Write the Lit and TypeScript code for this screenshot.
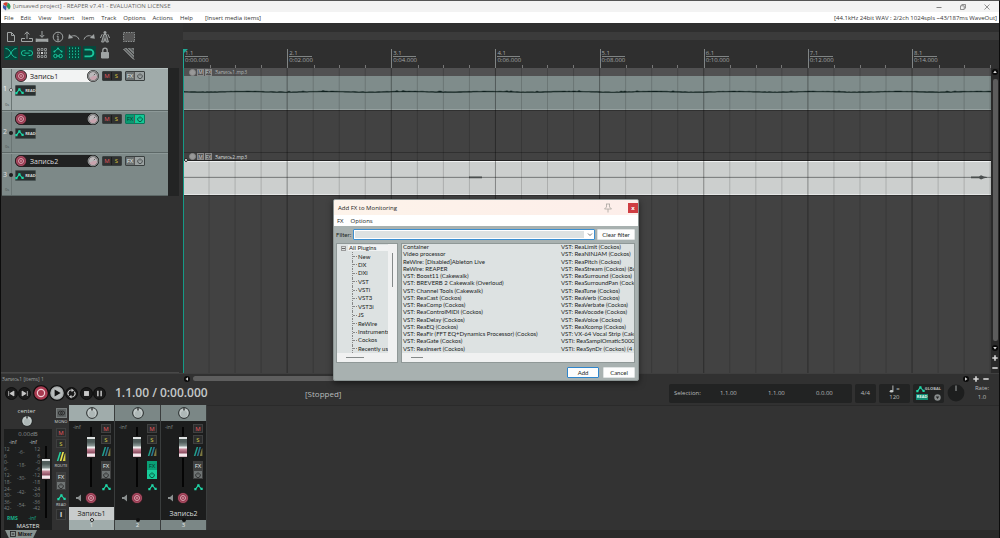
import { LitElement, html, svg, css, nothing } from "lit";
import { customElement } from "lit/decorators.js";
import { classMap } from "lit/directives/class-map.js";

/* ---------- data ---------- */
const MENUS = ["File", "Edit", "View", "Insert", "Item", "Track", "Options", "Actions", "Help"];
const TRACKS = [
  { n: 1, name: "Запись1", selected: true, fxOn: false },
  { n: 2, name: "", selected: false, fxOn: true },
  { n: 3, name: "Запись2", selected: false, fxOn: false },
];
const MARKS = [
  ["1.1", "0:00.000"], ["2.1", "0:02.000"], ["3.1", "0:04.000"], ["4.1", "0:06.000"],
  ["5.1", "0:08.000"], ["6.1", "0:10.000"], ["7.1", "0:12.000"], ["8.1", "0:14.000"],
];
const TREE = ["New", "DX", "DXi", "VST", "VSTi", "VST3", "VST3i", "JS", "ReWire", "Instruments", "Cockos", "Recently us"];
const FX_A = [
  "Container", "Video processor", "ReWire: [Disabled]Ableton Live", "ReWire: REAPER",
  "VST: Boost11 (Cakewalk)", "VST: BREVERB 2 Cakewalk (Overloud)", "VST: Channel Tools (Cakewalk)",
  "VST: ReaCast (Cockos)", "VST: ReaComp (Cockos)", "VST: ReaControlMIDI (Cockos)", "VST: ReaDelay (Cockos)",
  "VST: ReaEQ (Cockos)", "VST: ReaFir (FFT EQ+Dynamics Processor) (Cockos)", "VST: ReaGate (Cockos)",
  "VST: ReaInsert (Cockos)",
];
const FX_B = [
  "VST: ReaLimit (Cockos)", "VST: ReaNINJAM (Cockos)", "VST: ReaPitch (Cockos)", "VST: ReaStream (Cockos) (8c",
  "VST: ReaSurround (Cockos)", "VST: ReaSurroundPan (Cockos", "VST: ReaTune (Cockos)", "VST: ReaVerb (Cockos)",
  "VST: ReaVerbate (Cockos)", "VST: ReaVocode (Cockos)", "VST: ReaVoice (Cockos)", "VST: ReaXcomp (Cockos)",
  "VST: VX-64 Vocal Strip (Cake", "VSTi: ReaSamplOmatic5000 (", "VSTi: ReaSynDr (Cockos) (4 c",
];
const SCALE_L = ["12", "6", "0-", "6-", "12-", "18-", "24-", "30-", "36-", "42-"];
const SCALE_R = ["12", "6", "-0", "-6", "-12", "-18", "-24", "-30", "-36", "-42"];
const SCALE_M = ["-6-", "-18-", "-30-", "-42-", "-54-"];

/* width of one measure as a share of the arrange view */
const MEASURE = 12.89;

function wave(): string {
  let seed = 7;
  const rnd = () => (seed = (seed * 16807) % 2147483647) / 2147483647;
  let up = "";
  let down = "";
  for (let x = 0; x <= 808; x += 2) {
    const level = rnd() < 0.05 ? 1 : 0.1 + rnd() * 0.4;
    const mid = 15.5 + Math.sin(x / 13) * 0.3;
    up += `L${x} ${(mid - level).toFixed(1)}`;
    down = `L${x} ${(mid + 0.4).toFixed(1)}` + down;
  }
  return "M0 16" + up + down + "Z";
}

/* ---------- shared drawings ---------- */
const icon = (w: number, h: number, body: unknown) =>
  html`<svg width=${w} height=${h} viewBox="0 0 ${w} ${h}" fill="none" aria-hidden="true">${body}</svg>`;

const recIcon = () => icon(12, 12, svg`
  <circle cx="6" cy="6" r="5.6" fill="#96384e" stroke="#1c1c1c" stroke-width=".8"/>
  <circle cx="6" cy="6" r="4.4" stroke="#b8647a" stroke-width=".5"/>
  <circle cx="6" cy="6" r="2.5" stroke="#e0b0bc" stroke-width=".9"/>
  <circle cx="6" cy="6" r=".9" fill="#d898a8"/>`);
const volKnob = () => icon(12, 12, svg`
  <circle cx="6" cy="6" r="5.6" fill="#2a2a2a" stroke="#141414" stroke-width=".8"/>
  <circle cx="6" cy="6" r="4.9" stroke="#d8dcdc" stroke-width=".7"/>
  <circle cx="6" cy="6" r="4" fill="#bcb8ba"/>
  <path d="M2.4 8A4 4 0 0 0 9.9 6L6 6Z" fill="#c8a4ae"/>
  <path d="M6.8 5.2L8.4 3.6" stroke="#444" stroke-width=".8"/>`);
const panKnob = () => icon(12, 12, svg`
  <circle cx="6" cy="6" r="5.4" fill="#3b4141" stroke="#232727" stroke-width=".8"/>
  <circle cx="6" cy="6" r="4.8" fill="#c3cbca"/>
  <circle cx="6" cy="7" r="3.2" fill="#aeb8b7"/>
  <path d="M6 1.2V3.6" stroke="#111" stroke-width="1.2"/>`);
const power = () => icon(8, 8, svg`
  <path d="M2.7 2.4A2.3 2.3 0 1 0 5.3 2.4M4 1.3V3.6" stroke="currentColor" stroke-width=".8"/>`);
const envIcon = () => icon(9, 8, svg`
  <path d="M1.4 6.2L4.4 2.4L7.4 6" stroke="#1fd8a8" stroke-width="1.1"/>
  <path d="M.3 5h2.2v2.2H.3zM3.3 1.2h2.2v2.2H3.3zM6.5 4.8h2.2v2.2H6.5z" fill="#1fd8a8"/>`);
const routeIcon = (on: boolean) => icon(10, 11, svg`
  <path d="M.8 10L3.6 1H5.2L2.4 10Z" fill="${on ? "#27d0a0" : "#22a08c"}"/>
  <path d="M3.8 10L6.4 1H8L5.4 10Z" fill="${on ? "#f0ea50" : "#2a7890"}"/>
  <path d="M6.8 10L8.6 3.4L9.4 2V10Z" fill="${on ? "#d8d040" : "#7c7840"}"/>`);

const TOOLS_1: [string, unknown][] = [
  ["New project", svg`<path d="M3.5 2.5H7.5L10.5 5.5V11.5H3.5ZM7.5 2.5V5.5H10.5"/>`],
  ["Open project", svg`<path d="M1.5 8.5H5M9 8.5H12.5V11.5H1.5V8.5M7 9V2.2M4.6 4.4L7 1.8L9.4 4.4"/>`],
  ["Save project", svg`<path d="M1.5 9.5H12.5M1.5 11H12.5M1.5 8.5V12M12.5 8.5V12" stroke-width="1.6"/><path d="M7 1V7M4.8 5L7 7.4L9.2 5"/>`],
  ["Project settings", svg`<circle cx="7" cy="7" r="4.8"/><path d="M7 3.8V5M7 6V10M5.8 10H8.2M5.8 6.2H7"/>`],
  ["Undo", svg`<path d="M3 7C6 5 10.5 5 12 9.5"/><path d="M1.2 8.8L2 4L6.2 8Z" fill="currentColor" stroke="none"/>`],
  ["Redo", svg`<path d="M11 7C8 5 3.5 5 2 9.5"/><path d="M12.8 8.8L12 4L7.8 8Z" fill="currentColor" stroke="none"/>`],
  ["Metronome", svg`<path d="M5.8 4.5H8.2L10.4 12H8.2L7 8.5L5.8 12H3.6Z" fill="currentColor" fill-opacity=".45"/><path d="M2.4 8L4.2 4.2M11.6 8L9.8 4.2"/><circle cx="7" cy="2.6" r="1.5" fill="currentColor" stroke="none"/>`],
];
const TOOLS_2: [string, unknown, boolean][] = [
  ["Auto crossfade", svg`<path d="M1.5 2.5C7.5 2.5 6.5 11.5 12.5 11.5M1.5 11.5C7.5 11.5 6.5 2.5 12.5 2.5"/>`, true],
  ["Item grouping", svg`<path d="M5.5 9.5H3.8A2.4 2.4 0 0 1 3.8 4.7H5.5M8.5 4.7H10.2A2.4 2.4 0 0 1 10.2 9.5H8.5M4.5 7.1H9.5"/>`, true],
  ["Ripple editing", svg`<path d="M2.5 2.5h2v2h-2zM6 2.5h2v2h-2zM9.5 2.5h2v2h-2zM2.5 6h2v2h-2zM9.5 6h2v2h-2zM2.5 9.5h2v2h-2zM6 9.5h2v2h-2zM9.5 9.5h2v2h-2z" stroke-width=".8"/><path d="M6 6h2v2h-2z" fill="#d0d0d0" stroke="none"/>`, false],
  ["Move envelope", svg`<path d="M3.4 5.6L7 2.4L10.6 5.6"/><circle cx="7" cy="2.4" r="1" fill="currentColor" stroke="none"/><circle cx="3.4" cy="5.6" r="1" fill="currentColor" stroke="none"/><circle cx="10.6" cy="5.6" r="1" fill="currentColor" stroke="none"/><circle cx="4.4" cy="10" r="1.7"/><circle cx="9.6" cy="10" r="1.7"/><path d="M5.6 10H8.4"/>`, true],
  ["Grid lines", svg`<path d="M2.5 1.5V12.5M5.5 1.5V12.5M8.5 1.5V12.5M11.5 1.5V12.5" stroke-dasharray="1.4 1.6"/>`, true],
  ["Snap", svg`<path d="M2.5 3.6H8A3.4 3.4 0 0 1 8 10.4H2.5" stroke-width="1.9"/>`, true],
  ["Locking", svg`<path d="M3.5 6.5H10.5V12H3.5Z" fill="currentColor"/><path d="M4.8 6.5V4.4A2.2 2.2 0 0 1 9.2 4.4V6.5" stroke-width="1.3"/>`, false],
];

const base = css`
  * { box-sizing: border-box; }
  :host { display: block; font-family: "Open Sans", "Noto Sans", sans-serif; }
  button, input, select {
    font: inherit; color: inherit; margin: 0; padding: 0; border: 0; background: none;
    min-width: 0; outline: none; border-radius: 0;
  }
  button { display: flex; align-items: center; justify-content: center; white-space: nowrap; cursor: default; }
  svg { display: block; flex: none; }
  ul { list-style: none; margin: 0; padding: 0; }
`;

/* ---------- track control panel row ---------- */
@customElement("track-row")
class TrackRow extends LitElement {
  static properties = { track: { attribute: false } };
  declare track: (typeof TRACKS)[number];

  static styles = [base, css`
    :host { min-height: 0; }
    .row {
      height: 100%; display: grid; grid-template-columns: 10px 1fr; background: #7d8988; color: #ddd;
      border-bottom: 1px solid #5d6867; border-top: 1px solid #8d9998;
    }
    .row.selected { background: #a0abaa; border-top-color: #b4bfbe; }
    .side {
      border-right: 1px solid #6a7574; display: grid; grid-template-rows: 1fr 8px; align-items: center;
      font-size: 7px; line-height: 8px; padding: 9px 0 1px 1px; position: relative;
    }
    .selected .side { color: #f4f6f6; }
    .side small { font-size: 4px; line-height: 6px; color: #4a5252; padding-left: 2px; }
    .dot { position: absolute; right: -2px; top: 19px; width: 4px; height: 4px; border-radius: 2px; background: #1c1c1c; }
    .selected .dot { background: #fff; border: 1px solid #555; }
    .main { padding: 1px 0 0 3px; display: flex; flex-direction: column; gap: 3px; align-items: flex-start; }
    .top { display: flex; align-items: center; }
    .name {
      width: 84px; height: 12px; border-radius: 6px; background: #202121; display: flex; align-items: center;
      justify-content: space-between; margin-right: 3px;
    }
    .selected .name { background: #f2f3f3; color: #1a1a1a; }
    .name input { flex: 1; width: 20px; height: 12px; padding: 0 3px; font-size: 7px; }
    .pair { display: flex; height: 10px; border: 1px solid #3a4040; border-radius: 1px; margin-right: 3px; }
    .pair button { width: 9px; font-size: 6px; line-height: 8px; background: #2f3131; border-right: 1px solid #1c1c1c; }
    .pair button:last-child { border: 0; }
    .mute { color: #e0565e; }
    .solo { color: #d8c83c; }
    .pair.fx button { background: #6c7272; color: #e0e4e4; border-right-color: #555; }
    .pair.fx button:last-child { background: #9aa1a1; color: #3a3f3f; }
    .pair.fx.on { border-color: #0a7a5c; }
    .pair.fx.on button { background: #089a72; color: #053c2d; }
    .pair.fx.on button:last-child { background: #14c896; color: #053c2d; }
    .read {
      width: 21px; height: 11px; gap: 1px; background: #2a3030; border: 1px solid #4a5555; border-radius: 1px;
      font-size: 4px; color: #d8dcdc; font-weight: 700;
    }
  `];

  render() {
    const t = this.track;
    return html`
      <div class=${classMap({ row: true, selected: t.selected })}>
        <div class="side"><span>${t.n}</span><small>0s</small><i class="dot"></i></div>
        <div class="main">
          <div class="top">
            <div class="name">
              <button aria-label="Record arm">${recIcon()}</button>
              <input type="text" aria-label="Track name" .value=${t.name} />
              <button aria-label="Volume">${volKnob()}</button>
            </div>
            <div class="pair"><button class="mute">M</button><button class="solo">S</button></div>
            <div class=${classMap({ pair: true, fx: true, on: t.fxOn })}>
              <button>FX</button><button aria-label="FX bypass">${power()}</button>
            </div>
          </div>
          <button class="read">${envIcon()}READ</button>
        </div>
      </div>`;
  }
}

/* ---------- mixer ---------- */
const mixerStyles = css`
  .small { width: 10px; height: 9px; font-size: 6px; line-height: 8px; background: #2b2c2c; border: 1px solid #3f4040; }
  .small.fx { color: #e0e4e4; background: #3c3d3d; }
  .small.pow { background: #6f7474; color: #222; }
  .small.on { background: #0aa077; color: #053c2d; border-color: #0aa077; }
  .small.pow.on { background: #18cc9a; border-color: #18cc9a; }
  .small.mute { color: #e8565e; }
  .small.solo { color: #d8cc4a; }
  .stack { display: flex; flex-direction: column; align-items: center; }
  .fader {
    appearance: none; writing-mode: vertical-lr; direction: rtl; width: 10px;
    background: linear-gradient(90deg, transparent 4px, #050505 4px, #050505 6px, transparent 6px);
  }
  .fader::-webkit-slider-thumb {
    appearance: none; width: 10px; height: 22px; border-radius: 1px; border: 1px solid #1a1a1a;
    background: linear-gradient(#dfe3e3 0 2px, #4f5c5a 2px 5px, #8c9a97 9px, #f0f0f0 10px 11px, #c88c9c 12px, #8c4c60 16px, #f4e8ec 17px 19px, #b88c98 20px);
  }
`;

@customElement("mixer-strip")
class MixerStrip extends LitElement {
  static properties = { track: { attribute: false } };
  declare track: (typeof TRACKS)[number];

  static styles = [base, mixerStyles, css`
    :host { width: 46px; }
    .strip { background: #1c1d1d; border-right: 1px solid #3a3d3d; height: 100%; display: flex; flex-direction: column; }
    .pan { height: 16px; background: #7b8786; display: flex; align-items: center; justify-content: center; }
    .selected .pan { background: #a0acab; }
    .body { flex: 1; display: grid; grid-template-columns: 1fr 10px; padding: 3px 3px 0 4px; color: #8a8f8f; }
    .left { display: grid; grid-template-columns: 12px 1fr; grid-template-rows: 66px 16px; }
    .inf { font-size: 5px; line-height: 6px; }
    .fader { height: 60px; margin: 3px 0 0 1px; }
    .arm { justify-content: flex-start; }
    .gap { height: 2px; }
    .gap.big { height: 4px; }
    .name { height: 13px; line-height: 13px; font-size: 7px; text-align: center; color: #d8dcdc; }
    .selected .name { background: #c8cccc; color: #1b1b1b; }
    .num { height: 10px; background: #7b8786; color: #e4e8e8; font-size: 6px; line-height: 10px; text-align: center; position: relative; }
    .selected .num { background: #a0acab; }
    .num i { position: absolute; left: 50%; top: -2px; width: 4px; height: 4px; margin-left: -2px; border-radius: 2px; background: #111; }
    .selected .num i { background: #fff; border: 1px solid #222; }
  `];

  render() {
    const t = this.track;
    return html`
      <div class=${classMap({ strip: true, selected: t.selected })}>
        <div class="pan"><button aria-label="Pan">${panKnob()}</button></div>
        <div class="body">
          <div class="left">
            <span class="inf">-inf</span>
            <input class="fader" type="range" min="0" max="100" value="76" aria-label="Volume ${t.n}" />
            <button aria-label="Monitor">${icon(8, 8, svg`<path d="M1 3H3L6 .5V7.5L3 5H1Z" fill="#8a8f8f"/>`)}</button>
            <button class="arm" aria-label="Record arm">${recIcon()}</button>
          </div>
          <div class="stack">
            <button class="small mute">M</button><i class="gap"></i>
            <button class="small solo">S</button><i class="gap"></i>
            <button aria-label="Routing">${routeIcon(false)}</button><i class="gap big"></i>
            <button class=${classMap({ small: true, fx: true, on: t.fxOn })}>FX</button>
            <button class=${classMap({ small: true, pow: true, on: t.fxOn })} aria-label="FX bypass">${power()}</button>
            <i class="gap big"></i>
            <button aria-label="Envelope">${envIcon()}</button>
          </div>
        </div>
        <div class="name">${t.name}</div>
        <div class="num">${t.n}<i></i></div>
      </div>`;
  }
}

@customElement("master-strip")
class MasterStrip extends LitElement {
  static styles = [base, mixerStyles, css`
    .wrap { display: grid; grid-template-columns: 48px 14px; gap: 2px; height: 100%; padding-left: 3px; color: #8a8f8f; }
    .head { height: 24px; display: flex; flex-direction: column; align-items: center; font-size: 6px; line-height: 8px; color: #d0d4d4; padding: 2px 3px 0 0; }
    .left { display: flex; flex-direction: column; }
    .panel { flex: 1; background: #1d1e1e; display: flex; flex-direction: column; font-size: 6px; line-height: 8px; }
    .db { text-align: center; padding-top: 1px; }
    .peaks { display: flex; justify-content: space-between; padding: 0 15px 0 5px; font-size: 5px; color: #c0c4c4; }
    .meters { display: grid; grid-template-columns: 9px 1fr 10px 12px; height: 69px; font-size: 5px; }
    .scale { display: flex; flex-direction: column; height: 66px; color: #7a8080; }
    .scale span { flex: 1; line-height: 6px; }
    .scale.mid { text-align: center; }
    .scale.mid span { line-height: 13px; }
    .scale.right { text-align: right; }
    .fader { height: 72px; margin-left: 1px; }
    .rms { display: flex; justify-content: space-between; padding: 0 16px 0 3px; font-size: 5px; line-height: 7px; color: #18b48c; }
    .title { text-align: center; font-size: 6px; line-height: 8px; color: #e0e4e4; }
    .side { font-size: 4px; line-height: 8px; color: #d0d4d4; padding-top: 3px; }
    .mono { background: #5c6161; border: 1px solid #777c7c; }
    .gap { height: 2px; }
    .gap.big { height: 3px; }
    .info { height: 11px; font-size: 7px; font-weight: 700; color: #e0e0e0; }
  `];

  render() {
    return html`
      <div class="wrap">
        <div class="left">
          <div class="head"><span>center</span><button aria-label="Master pan">${panKnob()}</button></div>
          <div class="panel">
            <div class="db">0.00dB</div>
            <div class="peaks"><span>-inf</span><span>-inf</span></div>
            <div class="meters">
              <div class="scale">${SCALE_L.map((s) => html`<span>${s}</span>`)}</div>
              <div class="scale mid">${SCALE_M.map((s) => html`<span>${s}</span>`)}</div>
              <div class="scale right">${SCALE_R.map((s) => html`<span>${s}</span>`)}</div>
              <input class="fader" type="range" min="0" max="100" value="76" aria-label="Master volume" />
            </div>
            <div class="rms"><b>RMS</b><span>-inf</span></div>
            <div class="title">MASTER</div>
          </div>
        </div>
        <div class="stack side">
          <button class="mono" aria-label="Mono">${icon(9, 8, svg`<circle cx="3.4" cy="4" r="2" stroke="#222" stroke-width=".8"/><circle cx="5.6" cy="4" r="2" stroke="#222" stroke-width=".8"/>`)}</button>
          <span>MONO</span><i class="gap"></i>
          <button class="small mute">M</button><i class="gap"></i>
          <button class="small solo">S</button><i class="gap big"></i>
          <button aria-label="Routing">${routeIcon(true)}</button><span>ROUTE</span><i class="gap"></i>
          <button class="small fx">FX</button><button class="small pow" aria-label="FX bypass">${power()}</button>
          <i class="gap big"></i>
          <button aria-label="Envelope">${envIcon()}</button><span>READ</span>
          <button class="small info">i</button>
        </div>
      </div>`;
  }
}

/* ---------- FX browser ---------- */
@customElement("fx-dialog")
class FxDialog extends LitElement {
  static styles = [base, css`
    :host { font-family: Lato, "Liberation Sans", sans-serif; font-size: 6px; line-height: 6px; color: #1a1d1d; }
    .win { background: #a8b1b0; border: 1px solid #8c9594; border-radius: 2px; box-shadow: 0 2px 6px #0008; overflow: hidden; }
    .title { height: 15px; background: linear-gradient(90deg, #fdf3ea, #fdeeea); display: flex; align-items: center; padding-left: 4px; font-family: "Open Sans", sans-serif; }
    .title h1 { flex: 1; margin: 0; font: inherit; }
    .pin { margin-right: 15px; }
    .close { width: 10px; height: 10px; background: #cf3d42; color: #fff; font-weight: 700; }
    .menu { height: 11px; background: #fff; display: flex; gap: 7px; padding-left: 3px; font-family: "Open Sans", sans-serif; }
    .content { padding: 3px 3px 2px 2px; }
    .filter { display: grid; grid-template-columns: 15px 1fr 38px; gap: 2px; height: 11px; align-items: stretch; }
    .filter label { align-self: center; }
    .combo { display: flex; background: #fff; border: 1px solid #3c8fd0; border-radius: 1px; }
    .combo input { flex: 1; margin: 1px; background: #dde2e2; padding: 0 2px; }
    .combo button { width: 9px; }
    .btn { background: #fdfdfd; border: 1px solid #dfe3e3; border-radius: 1px; height: 11px; }
    .btn.primary { border-color: #2f86cc; }
    .panes { display: grid; grid-template-columns: 62px 1fr; gap: 3px; height: 120px; margin-top: 3px; }
    .pane { background: #dde2e2; border: 1px solid #8f9897; display: grid; grid-template-rows: 1fr 9px; overflow: hidden; }
    .hscroll { background: #f0f1f1; display: flex; align-items: center; padding-left: 9px; }
    .hscroll i { height: 1px; background: #858a8a; width: 18px; }
    .list .hscroll i { width: 12px; }
    .tree { display: grid; grid-template-columns: 1fr 9px; min-height: 0; }
    .vscroll { background: #f0f1f1; display: flex; justify-content: center; padding-top: 9px; }
    .vscroll i { width: 1px; height: 34px; background: #858a8a; }
    .nodes { display: grid; grid-auto-rows: 1fr; height: 109px; min-width: 0; }
    .nodes li { display: flex; align-items: center; white-space: nowrap; }
    .root span { background: #f0f2f2; padding: 0 1px; flex: 1; }
    .root i { width: 5px; height: 5px; border: 1px solid #999; margin: 0 2px 0 4px; }
    .root i::after { content: ""; display: block; height: 1px; margin-top: 1px; background: #666; }
    .kid { margin-left: 15px; border-left: 1px dotted #888; }
    .kid::before { content: ""; width: 4px; border-top: 1px dotted #888; margin-right: 1px; }
    .cols { display: grid; grid-template-columns: 158px 1fr; padding-left: 1px; height: 109px; }
    .cols ul { display: grid; grid-auto-rows: 1fr; height: 109px; }
    .cols li { white-space: nowrap; }
    .clip { overflow: hidden; min-height: 0; }
    .actions { display: flex; justify-content: flex-end; gap: 4px; margin-top: 4px; }
    .actions .btn { width: 32px; }
  `];

  render() {
    return html`
      <div class="win" role="dialog" aria-label="Add FX to Monitoring">
        <div class="title">
          <h1>Add FX to Monitoring</h1>
          <button class="pin" aria-label="Pin">${icon(10, 10, svg`<path d="M3 1H7M3.5 1V4L1.5 6H8.5L6.5 4V1M5 6V9.5" stroke="#a8a4a0" stroke-width=".8"/>`)}</button>
          <button class="close" aria-label="Close">x</button>
        </div>
        <div class="menu"><button>FX</button><button>Options</button></div>
        <div class="content">
          <div class="filter">
            <label for="filter">Filter:</label>
            <div class="combo">
              <input id="filter" type="text" />
              <button aria-label="Filter history">${icon(6, 5, svg`<path d="M1 1.5L3 3.5L5 1.5" stroke="#555" stroke-width=".8"/>`)}</button>
            </div>
            <button class="btn">Clear filter</button>
          </div>
          <div class="panes">
            <div class="pane">
              <div class="tree">
                <ul class="nodes">
                  <li class="root"><i></i><span>All Plugins</span></li>
                  ${TREE.map((t) => html`<li class="kid">${t}</li>`)}
                </ul>
                <div class="vscroll"><i></i></div>
              </div>
              <div class="hscroll"><i></i></div>
            </div>
            <div class="pane list">
              <div class="clip">
                <div class="cols">
                  <ul>${FX_A.map((t) => html`<li>${t}</li>`)}</ul>
                  <ul>${FX_B.map((t) => html`<li>${t}</li>`)}</ul>
                </div>
              </div>
              <div class="hscroll"><i></i></div>
            </div>
          </div>
          <div class="actions"><button class="btn primary">Add</button><button class="btn">Cancel</button></div>
        </div>
      </div>`;
  }
}

/* ---------- application ---------- */
@customElement("app-root")
class AppRoot extends LitElement {
  static styles = [base, css`
    .app {
      min-height: 100vh; display: flex; flex-direction: column; background: #313131; color: #b8bcbc;
      border: 1px solid #0c0c0c; border-top-color: #555; border-bottom: 0; position: relative; font-size: 6px;
    }
    .titlebar { height: 11px; background: #f3f3f3; color: #666; display: flex; align-items: center; padding-left: 1px; }
    .titlebar h1 { flex: 1; margin: 0 0 0 2px; font: inherit; line-height: 11px; }
    .titlebar button { width: 24px; height: 11px; }
    .menubar { height: 11px; background: #fff; color: #333; display: flex; align-items: center; padding: 0 2px 0 3px; }
    .menubar nav { display: flex; gap: 7px; margin-right: 12px; }
    .menubar span:last-child { margin-left: auto; }

    .work { flex: 1; display: grid; grid-template-columns: 182px 1fr; min-height: 350px; border-bottom: 1px solid #3f3f3f; }
    .tcp { display: flex; flex-direction: column; }
    .tools { height: 45px; display: grid; grid-template-columns: 110px 1fr; padding: 6px 0 6px 2px; color: #a0a4a4; }
    .grid { display: grid; grid-template-columns: repeat(7, 1fr); grid-template-rows: 16px 16px; }
    .grid button { margin: 1px; }
    .grid .on { background: #06483c; color: #1ac49c; }
    .extra { display: grid; grid-template-rows: 16px 16px; padding-left: 9px; justify-content: start; }
    .tracks { height: 128px; display: grid; grid-template-rows: repeat(3, 1fr); padding-left: 1px; border-right: 11px solid #232424; margin-right: 4px; }
    .status { margin-top: auto; border-bottom: 1px solid #484848; margin-right: 4px; }

    .arrange { display: grid; grid-template-columns: 1fr 8px; grid-template-rows: 45px 1fr; }
    .ruler { grid-column: 1 / 3; background: #2f2f2f; display: flex; flex-direction: column; min-width: 0; overflow: hidden; }
    .region { height: 8px; background: #3b3b3b; margin-top: 9px; }
    .marks { margin: auto 8px 0 0; display: flex; height: 19px; overflow: hidden; position: relative; }
    .mark {
      flex: 0 0 auto; border-left: 1px solid #808484; padding: 1px 0 0 1px; font-size: 6px; line-height: 7px; color: #a4a8a8;
      background: linear-gradient(#777, #777) 25% 100% / 1px 3px no-repeat, linear-gradient(#777, #777) 50% 100% / 1px 3px no-repeat, linear-gradient(#777, #777) 75% 100% / 1px 3px no-repeat;
    }
    .mark b { display: block; width: 23px; font-weight: 400; border-bottom: 1px solid #808484; line-height: 6px; }
    .cursor { position: absolute; left: 0; top: 0; }
    .view { background: #424242; position: relative; min-width: 0; overflow: hidden; }
    .lanes { height: 128px; display: grid; grid-template-rows: repeat(3, 1fr); }
    .lane { border-bottom: 1px solid #303030; min-height: 0; display: flex; flex-direction: column; }
    .cliphead { height: 8px; display: flex; align-items: center; gap: 1px; padding-left: 6px; font-size: 5px; line-height: 8px; color: #b0b4b4; flex: none; }
    .cliphead button { width: 7px; height: 7px; border: 1px solid #888; background: #555; color: #d0d0d0; }
    .cliphead .round { border-radius: 4px; background: #999; color: #333; }
    .cliphead span { padding-left: 2px; }
    .one .cliphead { background: #515152; }
    .three .cliphead { color: #d8dcdc; border-bottom: 1px solid #222; }
    .body { flex: 1; min-height: 0; }
    .body svg { width: 100%; height: 100%; }
    .one .body { background: #7f8c8b; border-bottom: 1px solid #95a09f; }
    .three .body { background: #cccfce; border-top: 1px solid #f0f2f2; border-bottom: 1px solid #e4e6e6; }
    .lines { position: absolute; inset: 0; width: 100%; height: 100%; }
    .node { position: absolute; left: 1px; top: 90px; width: 4px; height: 4px; border-radius: 2px; background: #fff; border: 1px solid #222; }
    .vbar { background: #2a2a2a; display: flex; flex-direction: column; align-items: center; gap: 4px; padding: 1px 0 2px; }
    .vbar i { flex: 1; width: 5px; background: #5c5c5c; border-radius: 2px; }

    .scroll { height: 9px; display: grid; grid-template-columns: 182px 1fr 36px; align-items: center; font-size: 5px; color: #9ca0a0; padding-left: 1px; }
    .hbar { display: flex; align-items: center; gap: 3px; }
    .hbar i { width: 50%; height: 5px; border-radius: 3px; background: #5e5e5e; }
    .zoom { display: flex; gap: 4px; }

    .transport { height: 22px; display: flex; align-items: center; padding: 0 10px 2px 4px; }
    .round { flex: none; }
    .buttons { display: flex; align-items: center; }
    .gapl { width: 2px; }
    .time { font-size: 12px; line-height: 20px; font-weight: 600; color: #c4c8c8; margin-left: 9px; width: 190px; white-space: nowrap; }
    .state { font-size: 8px; flex: 1; }
    .boxes { display: flex; gap: 3px; align-items: center; font-size: 6px; line-height: 8px; }
    .box { height: 19px; background: #222323; border-radius: 2px; display: flex; align-items: center; justify-content: center; }
    .sel { width: 183px; display: grid; grid-template-columns: 46px 48px 48px 1fr; justify-items: start; padding-left: 5px; }
    .sig { width: 21px; }
    .tempo { width: 31px; flex-direction: column; }
    .tempo .note { display: flex; gap: 2px; align-items: center; }
    .auto { width: 31px; display: grid; grid-template-columns: 1fr; padding: 1px 3px; font-size: 4px; font-weight: 700; }
    .auto div { display: flex; align-items: center; justify-content: space-between; height: 8px; }
    .auto mark { background: #128a70; color: #e0fff4; line-height: 6px; padding: 0 1px; }
    .rate { text-align: center; line-height: 9px; padding-left: 7px; }

    .mixer { height: 125px; display: grid; grid-template-columns: 68px auto 1fr; }
    .strips { display: flex; }
    .void { background: #333333; border-top: 1px solid #2a2a2a; }
    .dock { height: 8px; background: #2a2a2a; display: flex; padding-left: 4px; }
    .tab { height: 8px; width: 32px; background: #87928f; color: #111; font-weight: 700; font-size: 5px; line-height: 8px; gap: 2px; clip-path: polygon(0 0, 100% 0, 88% 100%, 12% 100%); }
    fx-dialog { position: absolute; left: 332px; top: 198px; width: 306px; }
  `];

  private roundButton(label: string, d: number, fill: string, body: unknown) {
    return html`<button class="round" aria-label=${label}>
      <svg width=${d} height=${d} viewBox="-8 -8 16 16" fill="none" aria-hidden="true">
        <circle r="7.4" fill=${fill} stroke="#0e0e0e" stroke-width="1.2"/>${body}
      </svg></button>`;
  }

  private tiny(label: string, path: string, disc = true) {
    return html`<button aria-label=${label}>${icon(6, 6, svg`
      ${disc ? svg`<circle cx="3" cy="3" r="3" fill="#0a0a0a"/>` : nothing}
      <path d=${path} fill="#d8d8d8"/>`)}</button>`;
  }

  render() {
    const lines = Array.from({ length: 32 }, (_, i) => i).slice(1);
    return html`
      <div class="app">
        <header class="titlebar">
          ${icon(9, 9, svg`<circle cx="4.5" cy="4.5" r="4" fill="#d8dcd8"/><path d="M4.5 4.5L1 2A4 4 0 0 1 6 .8Z" fill="#d04030"/><path d="M4.5 4.5L6 .8A4 4 0 0 1 7 7.6Z" fill="#2a9a58"/><path d="M4.5 4.5L1 3V6L4 8.5Z" fill="#3a58b0"/>`)}
          <h1>[unsaved project] - REAPER v7.41 - EVALUATION LICENSE</h1>
          <button aria-label="Minimize">${icon(6, 6, svg`<path d="M.5 3.5H5.5" stroke="#666" stroke-width=".8"/>`)}</button>
          <button aria-label="Restore">${icon(6, 6, svg`<path d="M.5 1.8H4.2V5.5H.5ZM1.8 1.6V.5H5.5V4.2H4.4" stroke="#666" stroke-width=".7"/>`)}</button>
          <button aria-label="Close">${icon(6, 6, svg`<path d="M.5 .5L5.5 5.5M5.5 .5L.5 5.5" stroke="#666" stroke-width=".7"/>`)}</button>
        </header>
        <div class="menubar">
          <nav>${MENUS.map((m) => html`<button>${m}</button>`)}</nav>
          <span>[Insert media items]</span>
          <span>[44.1kHz 24bit WAV : 2/2ch 1024spls ~43/187ms WaveOut]</span>
        </div>

        <main class="work">
          <section class="tcp">
            <div class="tools">
              <div class="grid">
                ${TOOLS_1.map(([l, g]) => html`<button aria-label=${l}>${icon(14, 14, svg`<g stroke="currentColor" stroke-width="1">${g}</g>`)}</button>`)}
                ${TOOLS_2.map(([l, g, on]) => html`<button class=${on ? "on" : ""} aria-label=${l}>${icon(14, 14, svg`<g stroke="currentColor" stroke-width="1">${g}</g>`)}</button>`)}
              </div>
              <div class="extra">
                <button aria-label="Marquee">${icon(14, 12, svg`<rect x="1.5" y="1.5" width="11" height="9" fill="#555" stroke="#8a8e8e" stroke-dasharray="1.5 1"/>`)}</button>
                <button aria-label="Envelope lock">${icon(14, 14, svg`<path d="M2 2H12V12Z" fill="#7c8080"/><path d="M5 2L12 9M8.5 2L12 5.5" stroke="#2f2f2f" stroke-width=".8"/><path d="M1.5 3L12 13.5" stroke="#c0c4c4"/>`)}</button>
              </div>
            </div>
            <div class="tracks">${TRACKS.map((t) => html`<track-row .track=${t}></track-row>`)}</div>
            <div class="status"></div>
          </section>

          <section class="arrange">
            <div class="ruler">
              <div class="region"></div>
              <div class="marks">
                ${MARKS.map(([bar, time]) => html`<div class="mark" style="width:${MEASURE}%"><b>${bar}</b>${time}</div>`)}
                <svg class="cursor" width="6" height="19" viewBox="0 0 6 19" aria-hidden="true"><path d="M0 0H5L1 4V19H0Z" fill="#1fa894"/></svg>
              </div>
            </div>
            <div class="view">
              <div class="lanes">
                <div class="lane one">
                  <div class="cliphead"><button class="round" aria-label="Volume"></button><button>M</button><button>FX</button><span>Запись1.mp3</span></div>
                  <div class="body"><svg viewBox="0 0 808 32" preserveAspectRatio="none" aria-hidden="true"><path d=${wave()} fill="#10201e" stroke="#10201e" stroke-width=".4"/></svg></div>
                </div>
                <div class="lane"></div>
                <div class="lane three">
                  <div class="cliphead"><button class="round" aria-label="Volume"></button><button>M</button><button>FX</button><span>Запись2.mp3</span></div>
                  <div class="body"><svg viewBox="0 0 808 34" preserveAspectRatio="none" aria-hidden="true">
                    <path d="M0 16.5H808" stroke="#707474"/>
                    <path d="M286 15.5H299V17.5H286ZM788 15.6L796 15.6L798 14.2L801 15.5L804 16L804 17L801 17.5L798 18.8L796 17.4H788Z" fill="#4a4e4e"/>
                  </svg></div>
                </div>
              </div>
              <svg class="lines" aria-hidden="true">
                ${lines.map((i) => svg`<line x1="${(i * MEASURE) / 4}%" x2="${(i * MEASURE) / 4}%" y1="0" y2="100%" stroke="#000" stroke-opacity="${i % 4 ? 0.16 : 0.36}"/>`)}
                <line x1="0" x2="0" y1="0" y2="100%" stroke="#159a86" stroke-width="2"/>
              </svg>
              <i class="node"></i>
            </div>
            <div class="vbar">
              ${this.tiny("Scroll up", "M3 1.5L4.8 4H1.2Z")}<i></i>
              ${this.tiny("Scroll down", "M3 4.5L4.8 2H1.2Z")}
              ${this.tiny("Zoom in vertically", "M2.2 .3H3.8V2.2H5.7V3.8H3.8V5.7H2.2V3.8H.3V2.2H2.2Z", false)}
              ${this.tiny("Zoom out vertically", "M.3 2.2H5.7V3.8H.3Z", false)}
            </div>
          </section>
        </main>

        <div class="scroll">
          <span>Запись1 [items] 1</span>
          <div class="hbar">${this.tiny("Scroll left", "M1.5 3L4 1.2V4.8Z")}<i></i></div>
          <div class="zoom">
            ${this.tiny("Scroll right", "M4.5 3L2 1.2V4.8Z")}
            ${this.tiny("Zoom in", "M2.2 .3H3.8V2.2H5.7V3.8H3.8V5.7H2.2V3.8H.3V2.2H2.2Z", false)}
            ${this.tiny("Zoom out", "M.3 2.2H5.7V3.8H.3Z", false)}
          </div>
        </div>

        <section class="transport">
          <div class="buttons">
            ${this.roundButton("Go to start", 13, "#1a1a1a", svg`<path d="M-3.5 -3V3M3 -3L-2 0L3 3Z" fill="#c8c8c8" stroke="#c8c8c8"/>`)}
            ${this.roundButton("Go to end", 13, "#1a1a1a", svg`<path d="M3.5 -3V3M-3 -3L2 0L-3 3Z" fill="#c8c8c8" stroke="#c8c8c8"/>`)}
            <i class="gapl"></i>
            ${this.roundButton("Record", 16, "#a83a50", svg`<circle r="3.6" stroke="#f0d0d6" stroke-width="1.2"/>`)}
            ${this.roundButton("Play", 16, "#a4a8a8", svg`<circle r="5.5" fill="#b8bcbc"/><path d="M-2.4 -3.4L3.6 0L-2.4 3.4Z" fill="#111"/>`)}
            ${this.roundButton("Repeat", 13, "#1a1a1a", svg`<path d="M-3.4 2.4A4 4 0 0 1 1 -4M3.4 -2.4A4 4 0 0 1 -1 4" stroke="#c8c8c8" stroke-width="1.4"/><path d="M0 -6.2L3.2 -3.8L0 -1.8ZM0 6.2L-3.2 3.8L0 1.8Z" fill="#c8c8c8"/>`)}
            <i class="gapl"></i>
            ${this.roundButton("Stop", 13, "#1a1a1a", svg`<rect x="-3" y="-3" width="6" height="6" fill="#c8c8c8"/>`)}
            ${this.roundButton("Pause", 13, "#1a1a1a", svg`<path d="M-2 -3.4V3.4M2 -3.4V3.4" stroke="#c8c8c8" stroke-width="1.8"/>`)}
          </div>
          <div class="time">1.1.00 / 0:00.000</div>
          <div class="state">[Stopped]</div>
          <div class="boxes">
            <div class="box sel"><span>Selection:</span><span>1.1.00</span><span>1.1.00</span><span>0.0.00</span></div>
            <div class="box sig">4/4</div>
            <div class="box tempo">
              <span class="note">${icon(5, 8, svg`<path d="M3.9 .5V6" stroke="#c8cccc" stroke-width=".9"/><ellipse cx="2.5" cy="6.2" rx="1.8" ry="1.3" fill="#c8cccc"/>`)}=</span>
              <span>120</span>
            </div>
            <div class="box auto">
              <div>${envIcon()}<span>GLOBAL</span></div>
              <div><mark>READ</mark>${icon(7, 7, svg`<circle cx="3.5" cy="3.5" r="3.2" fill="#888c8c"/><path d="M1.8 2.6H5.2L3.5 5Z" fill="#222"/>`)}</div>
            </div>
            <button aria-label="Playback rate">${icon(18, 18, svg`<circle cx="9" cy="9" r="8.4" fill="#1d1e1e"/><path d="M9 1.5V7" stroke="#b0b4b4" stroke-width=".9"/>`)}</button>
            <div class="rate">Rate:<br />1.0</div>
          </div>
        </section>

        <section class="mixer">
          <master-strip></master-strip>
          <div class="strips">${TRACKS.map((t) => html`<mixer-strip .track=${t}></mixer-strip>`)}</div>
          <div class="void"></div>
        </section>
        <footer class="dock"><button class="tab">${icon(6, 6, svg`<rect x=".5" y=".5" width="5" height="5" stroke="#222" stroke-width=".8"/><path d="M1.8 3H4.2" stroke="#222"/>`)}Mixer</button></footer>

        <fx-dialog></fx-dialog>
      </div>`;
  }
}
